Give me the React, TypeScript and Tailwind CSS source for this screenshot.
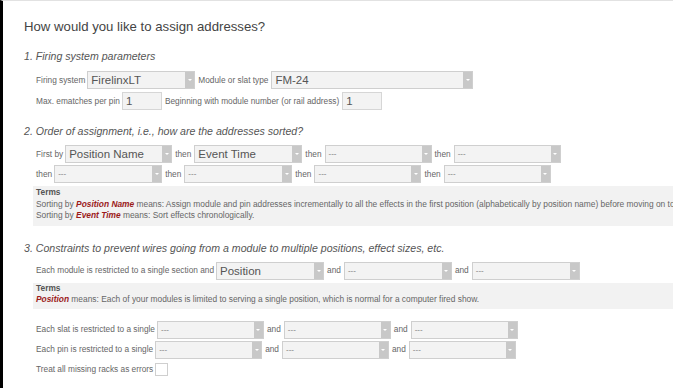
import type { ReactNode } from "react";

function Select({ value, width, big = false }: { value: string; width: number; big?: boolean }) {
  return (
    <div
      className="flex h-[18px] shrink-0 items-stretch border border-[#cfcfcf] bg-[#f3f3f3]"
      style={{ width }}
    >
      <span
        className={
          big
            ? "flex-1 truncate pl-[3px] text-[11.5px] leading-[16px] text-[#555]"
            : "flex-1 truncate pl-[3px] text-[8px] leading-[16px] text-[#777]"
        }
      >
        {value}
      </span>
      <span className="flex w-[9px] items-center justify-center bg-[#c8c8c8]">
        <span className="h-0 w-0 border-x-[2px] border-t-[2px] border-x-transparent border-t-white" />
      </span>
    </div>
  );
}

function Input({ value, width }: { value: string; width: number }) {
  return (
    <div
      className="h-[18px] shrink-0 border border-[#d6d6d6] bg-[#f3f3f3] pl-[3px] text-[11.5px] leading-[16px] text-[#555]"
      style={{ width }}
    >
      {value}
    </div>
  );
}

function Row({ children, className = "" }: { children: ReactNode; className?: string }) {
  return <div className={"flex items-center gap-[2px] pl-[36px] text-[8.3px] text-[#666] " + className}>{children}</div>;
}

function Word({ children }: { children: ReactNode }) {
  return <span className="px-[1px] text-[8.3px] text-[#666]">{children}</span>;
}

function Em({ children }: { children: ReactNode }) {
  return <b className="italic text-[#9b1b1b]">{children}</b>;
}

export default function App() {
  return (
    <div
      className="h-[388px] w-[673px] overflow-hidden border-l-[3px] border-t border-l-black border-t-[#e2e2e2] bg-white"
      style={{ fontFamily: '"Liberation Sans", Arial, sans-serif' }}
    >
      <div className="-ml-[3px]">
        <h1 className="pl-[24px] pt-[17px] text-[13.2px] leading-[18px] text-[#444]">How would you like to assign addresses?</h1>

        <h2 className="mt-[14px] pl-[24px] text-[10.6px] italic leading-[12px] text-[#555]">1. Firing system parameters</h2>
        <Row className="mt-[9px]">
          <span>Firing system</span>
          <Select value="FirelinxLT" width={108} big />
          <Word>Module or slat type</Word>
          <Select value="FM-24" width={202} big />
        </Row>
        <Row className="mt-[3px]">
          <span>Max. ematches per pin</span>
          <Input value="1" width={40} />
          <Word>Beginning with module number (or rail address)</Word>
          <Input value="1" width={40} />
        </Row>

        <h2 className="mt-[15px] pl-[24px] text-[10.6px] italic leading-[12px] text-[#555]">
          2. Order of assignment, i.e., how are the addresses sorted?
        </h2>
        <Row className="mt-[8px]">
          <span>First by</span>
          <Select value="Position Name" width={107} big />
          <Word>then</Word>
          <Select value="Event Time" width={108} big />
          <Word>then</Word>
          <Select value="---" width={107} />
          <Word>then</Word>
          <Select value="---" width={107} />
        </Row>
        <Row className="mt-[2px]">
          <span>then</span>
          <Select value="---" width={108} />
          <Word>then</Word>
          <Select value="---" width={108} />
          <Word>then</Word>
          <Select value="---" width={107} />
          <Word>then</Word>
          <Select value="---" width={107} />
        </Row>
        <div className="ml-[33px] mt-[3px] overflow-hidden whitespace-nowrap bg-[#f2f2f2] px-[3px] pb-[4px] pt-[1px] text-[8.4px] leading-[11.5px] text-[#666]">
          <div className="font-bold text-[#555]">Terms</div>
          <div>
            Sorting by <Em>Position Name</Em> means: Assign module and pin addresses incrementally to all the effects in the
            first position (alphabetically by position name) before moving on to the next position.
          </div>
          <div>
            Sorting by <Em>Event Time</Em> means: Sort effects chronologically.
          </div>
        </div>

        <h2 className="mt-[16px] pl-[24px] text-[10.6px] italic leading-[12px] text-[#555]">
          3. Constraints to prevent wires going from a module to multiple positions, effect sizes, etc.
        </h2>
        <Row className="mt-[8px]">
          <span>Each module is restricted to a single section and</span>
          <Select value="Position" width={108} big />
          <Word>and</Word>
          <Select value="---" width={108} />
          <Word>and</Word>
          <Select value="---" width={108} />
        </Row>
        <div className="ml-[33px] mt-[3px] whitespace-nowrap bg-[#f2f2f2] px-[3px] pb-[3px] pt-[0px] text-[8.4px] leading-[11.5px] text-[#666]">
          <div className="font-bold text-[#555]">Terms</div>
          <div>
            <Em>Position</Em> means: Each of your modules is limited to serving a single position, which is normal for a
            computer fired show.
          </div>
        </div>

        <Row className="mt-[12px]">
          <span>Each slat is restricted to a single</span>
          <Select value="---" width={107} />
          <Word>and</Word>
          <Select value="---" width={107} />
          <Word>and</Word>
          <Select value="---" width={107} />
        </Row>
        <Row className="mt-[2px]">
          <span>Each pin is restricted to a single</span>
          <Select value="---" width={107} />
          <Word>and</Word>
          <Select value="---" width={107} />
          <Word>and</Word>
          <Select value="---" width={107} />
        </Row>
        <Row className="mt-[4px]">
          <span>Treat all missing racks as errors</span>
          <div className="h-[13px] w-[13px] border border-[#cfcfcf] bg-white" />
        </Row>
      </div>
    </div>
  );
}
